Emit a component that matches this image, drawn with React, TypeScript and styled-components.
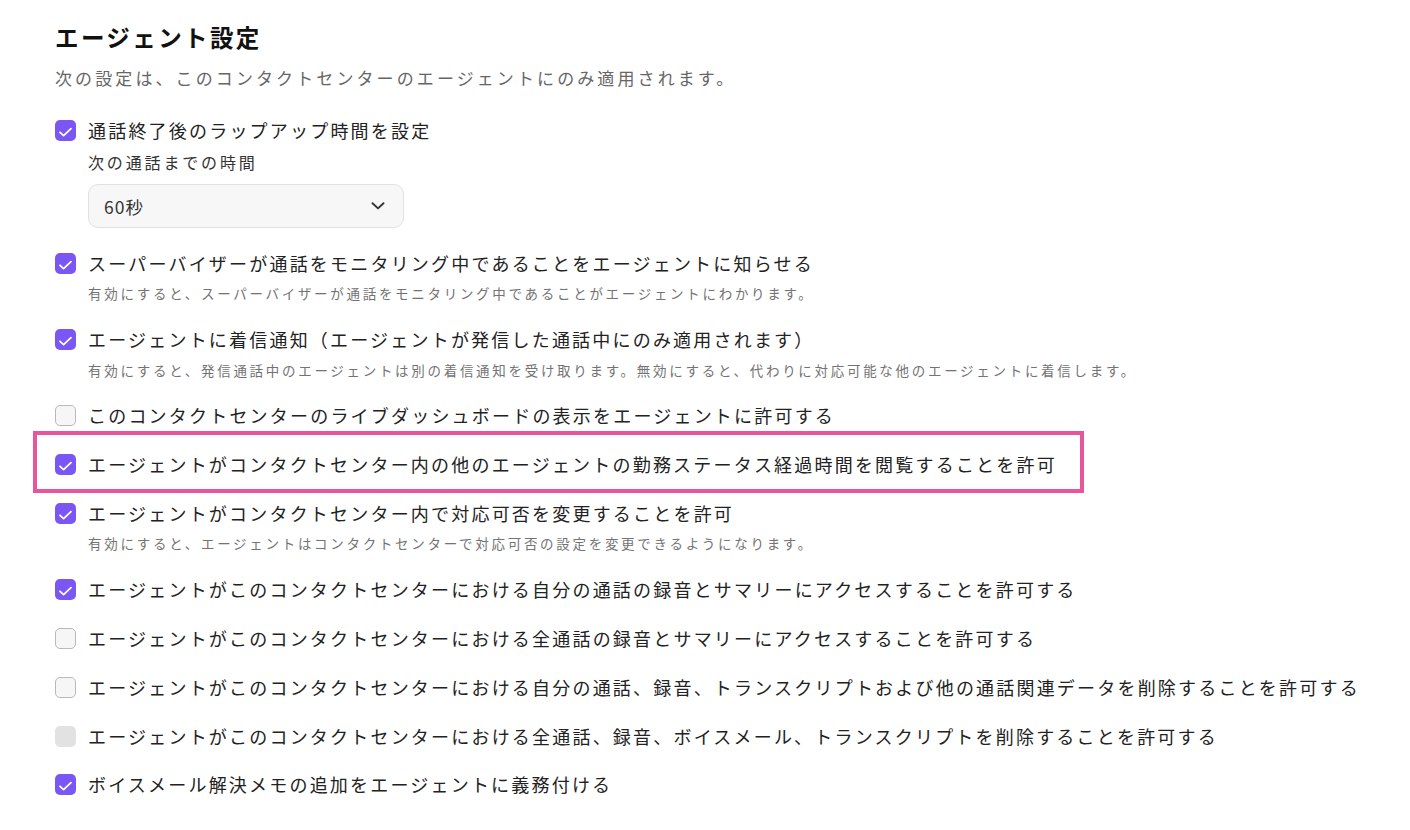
import React from 'react';
import styled, { createGlobalStyle } from 'styled-components';

const GlobalStyle = createGlobalStyle`
  html, body {
    margin: 0;
    padding: 0;
    background: #ffffff;
  }
  body {
    font-family: "Noto Sans CJK JP", "Noto Sans", sans-serif;
    color: #222222;
  }
`;

type Status = 'on' | 'off' | 'disabled';

interface Setting {
  label: string;
  status: Status;
  desc?: string;
  highlight?: boolean;
  wrapup?: boolean;
}

const settings: Setting[] = [
  { label: '通話終了後のラップアップ時間を設定', status: 'on', wrapup: true },
  {
    label: 'スーパーバイザーが通話をモニタリング中であることをエージェントに知らせる',
    status: 'on',
    desc: '有効にすると、スーパーバイザーが通話をモニタリング中であることがエージェントにわかります。',
  },
  {
    label: 'エージェントに着信通知（エージェントが発信した通話中にのみ適用されます）',
    status: 'on',
    desc: '有効にすると、発信通話中のエージェントは別の着信通知を受け取ります。無効にすると、代わりに対応可能な他のエージェントに着信します。',
  },
  { label: 'このコンタクトセンターのライブダッシュボードの表示をエージェントに許可する', status: 'off' },
  {
    label: 'エージェントがコンタクトセンター内の他のエージェントの勤務ステータス経過時間を閲覧することを許可',
    status: 'on',
    highlight: true,
  },
  {
    label: 'エージェントがコンタクトセンター内で対応可否を変更することを許可',
    status: 'on',
    desc: '有効にすると、エージェントはコンタクトセンターで対応可否の設定を変更できるようになります。',
  },
  { label: 'エージェントがこのコンタクトセンターにおける自分の通話の録音とサマリーにアクセスすることを許可する', status: 'on' },
  { label: 'エージェントがこのコンタクトセンターにおける全通話の録音とサマリーにアクセスすることを許可する', status: 'off' },
  {
    label: 'エージェントがこのコンタクトセンターにおける自分の通話、録音、トランスクリプトおよび他の通話関連データを削除することを許可する',
    status: 'off',
  },
  {
    label: 'エージェントがこのコンタクトセンターにおける全通話、録音、ボイスメール、トランスクリプトを削除することを許可する',
    status: 'disabled',
  },
  { label: 'ボイスメール解決メモの追加をエージェントに義務付ける', status: 'on' },
];

const Page = styled.div`
  padding: 20px 0 30px 55px;
`;

const Title = styled.h2`
  margin: 0;
  font-size: 23.5px;
  line-height: 34px;
  font-weight: 700;
  letter-spacing: 2.4px;
  color: #111111;
`;

const Subtitle = styled.p`
  margin: 11px 0 25px;
  font-size: 17px;
  line-height: 26px;
  letter-spacing: 3.1px;
  color: #666666;
`;

const List = styled.div`
  display: flex;
  flex-direction: column;
  gap: 20.8px;
`;

const Item = styled.div<{ $highlight?: boolean }>`
  position: relative;
  display: flex;
  align-items: flex-start;
  gap: 12px;
  width: fit-content;

  ${({ $highlight }) =>
    $highlight &&
    `
    &::after {
      content: "";
      position: absolute;
      left: -22px;
      top: -19px;
      width: 1051px;
      height: 62px;
      box-sizing: border-box;
      border: 4px solid #e8559c;
      pointer-events: none;
    }
  `}
`;

const Box = styled.span<{ $status: Status }>`
  flex: none;
  box-sizing: border-box;
  width: 21px;
  height: 21px;
  margin-top: 4px;
  border-radius: 5px;
  display: flex;
  align-items: center;
  justify-content: center;
  background: ${({ $status }) =>
    $status === 'on' ? '#7a56f4' : $status === 'disabled' ? '#e2e2e2' : '#f6f6f6'};
  border: ${({ $status }) => ($status === 'off' ? '1.5px solid #b9b9b9' : 'none')};
`;

const Body = styled.div`
  display: flex;
  flex-direction: column;
`;

const Label = styled.div`
  font-size: 18px;
  line-height: 28px;
  letter-spacing: 2.2px;
  white-space: nowrap;
  color: #222222;
`;

const Desc = styled.div`
  margin-top: 5.5px;
  font-size: 13.5px;
  line-height: 22px;
  letter-spacing: 2.7px;
  white-space: nowrap;
  color: #737373;
`;

const FieldLabel = styled.div`
  margin-top: 7px;
  font-size: 16px;
  line-height: 22px;
  letter-spacing: 2.85px;
  color: #333333;
`;

const Select = styled.div`
  margin-top: 11px;
  box-sizing: border-box;
  width: 316px;
  height: 44px;
  padding: 0 18px 0 15px;
  display: flex;
  align-items: center;
  justify-content: space-between;
  background: #f7f7f7;
  border: 1px solid #e1e1e1;
  border-radius: 10px;
  font-size: 17.5px;
  letter-spacing: 1px;
  color: #333333;
`;

const Check = () => (
  <svg width="21" height="21" viewBox="0 0 21 21" fill="none">
    <path d="M5 12.3 L8.6 15.6 L16 8.6" stroke="#ffffff" strokeWidth="1.8" strokeLinecap="round" strokeLinejoin="round" />
  </svg>
);

const Chevron = () => (
  <svg width="14" height="8" viewBox="0 0 14 8" fill="none">
    <path d="M1.5 1.2 L7 6.4 L12.5 1.2" stroke="#333333" strokeWidth="1.9" strokeLinecap="round" strokeLinejoin="round" />
  </svg>
);

const App = () => {
  return (
    <>
      <GlobalStyle />
      <Page>
        <Title>エージェント設定</Title>
        <Subtitle>次の設定は、このコンタクトセンターのエージェントにのみ適用されます。</Subtitle>
        <List>
          {settings.map((s) => (
            <Item key={s.label} $highlight={s.highlight}>
              <Box $status={s.status}>{s.status === 'on' && <Check />}</Box>
              <Body>
                <Label>{s.label}</Label>
                {s.desc && <Desc>{s.desc}</Desc>}
                {s.wrapup && (
                  <>
                    <FieldLabel>次の通話までの時間</FieldLabel>
                    <Select>
                      <span>60秒</span>
                      <Chevron />
                    </Select>
                  </>
                )}
              </Body>
            </Item>
          ))}
        </List>
      </Page>
    </>
  );
};

export default App;
